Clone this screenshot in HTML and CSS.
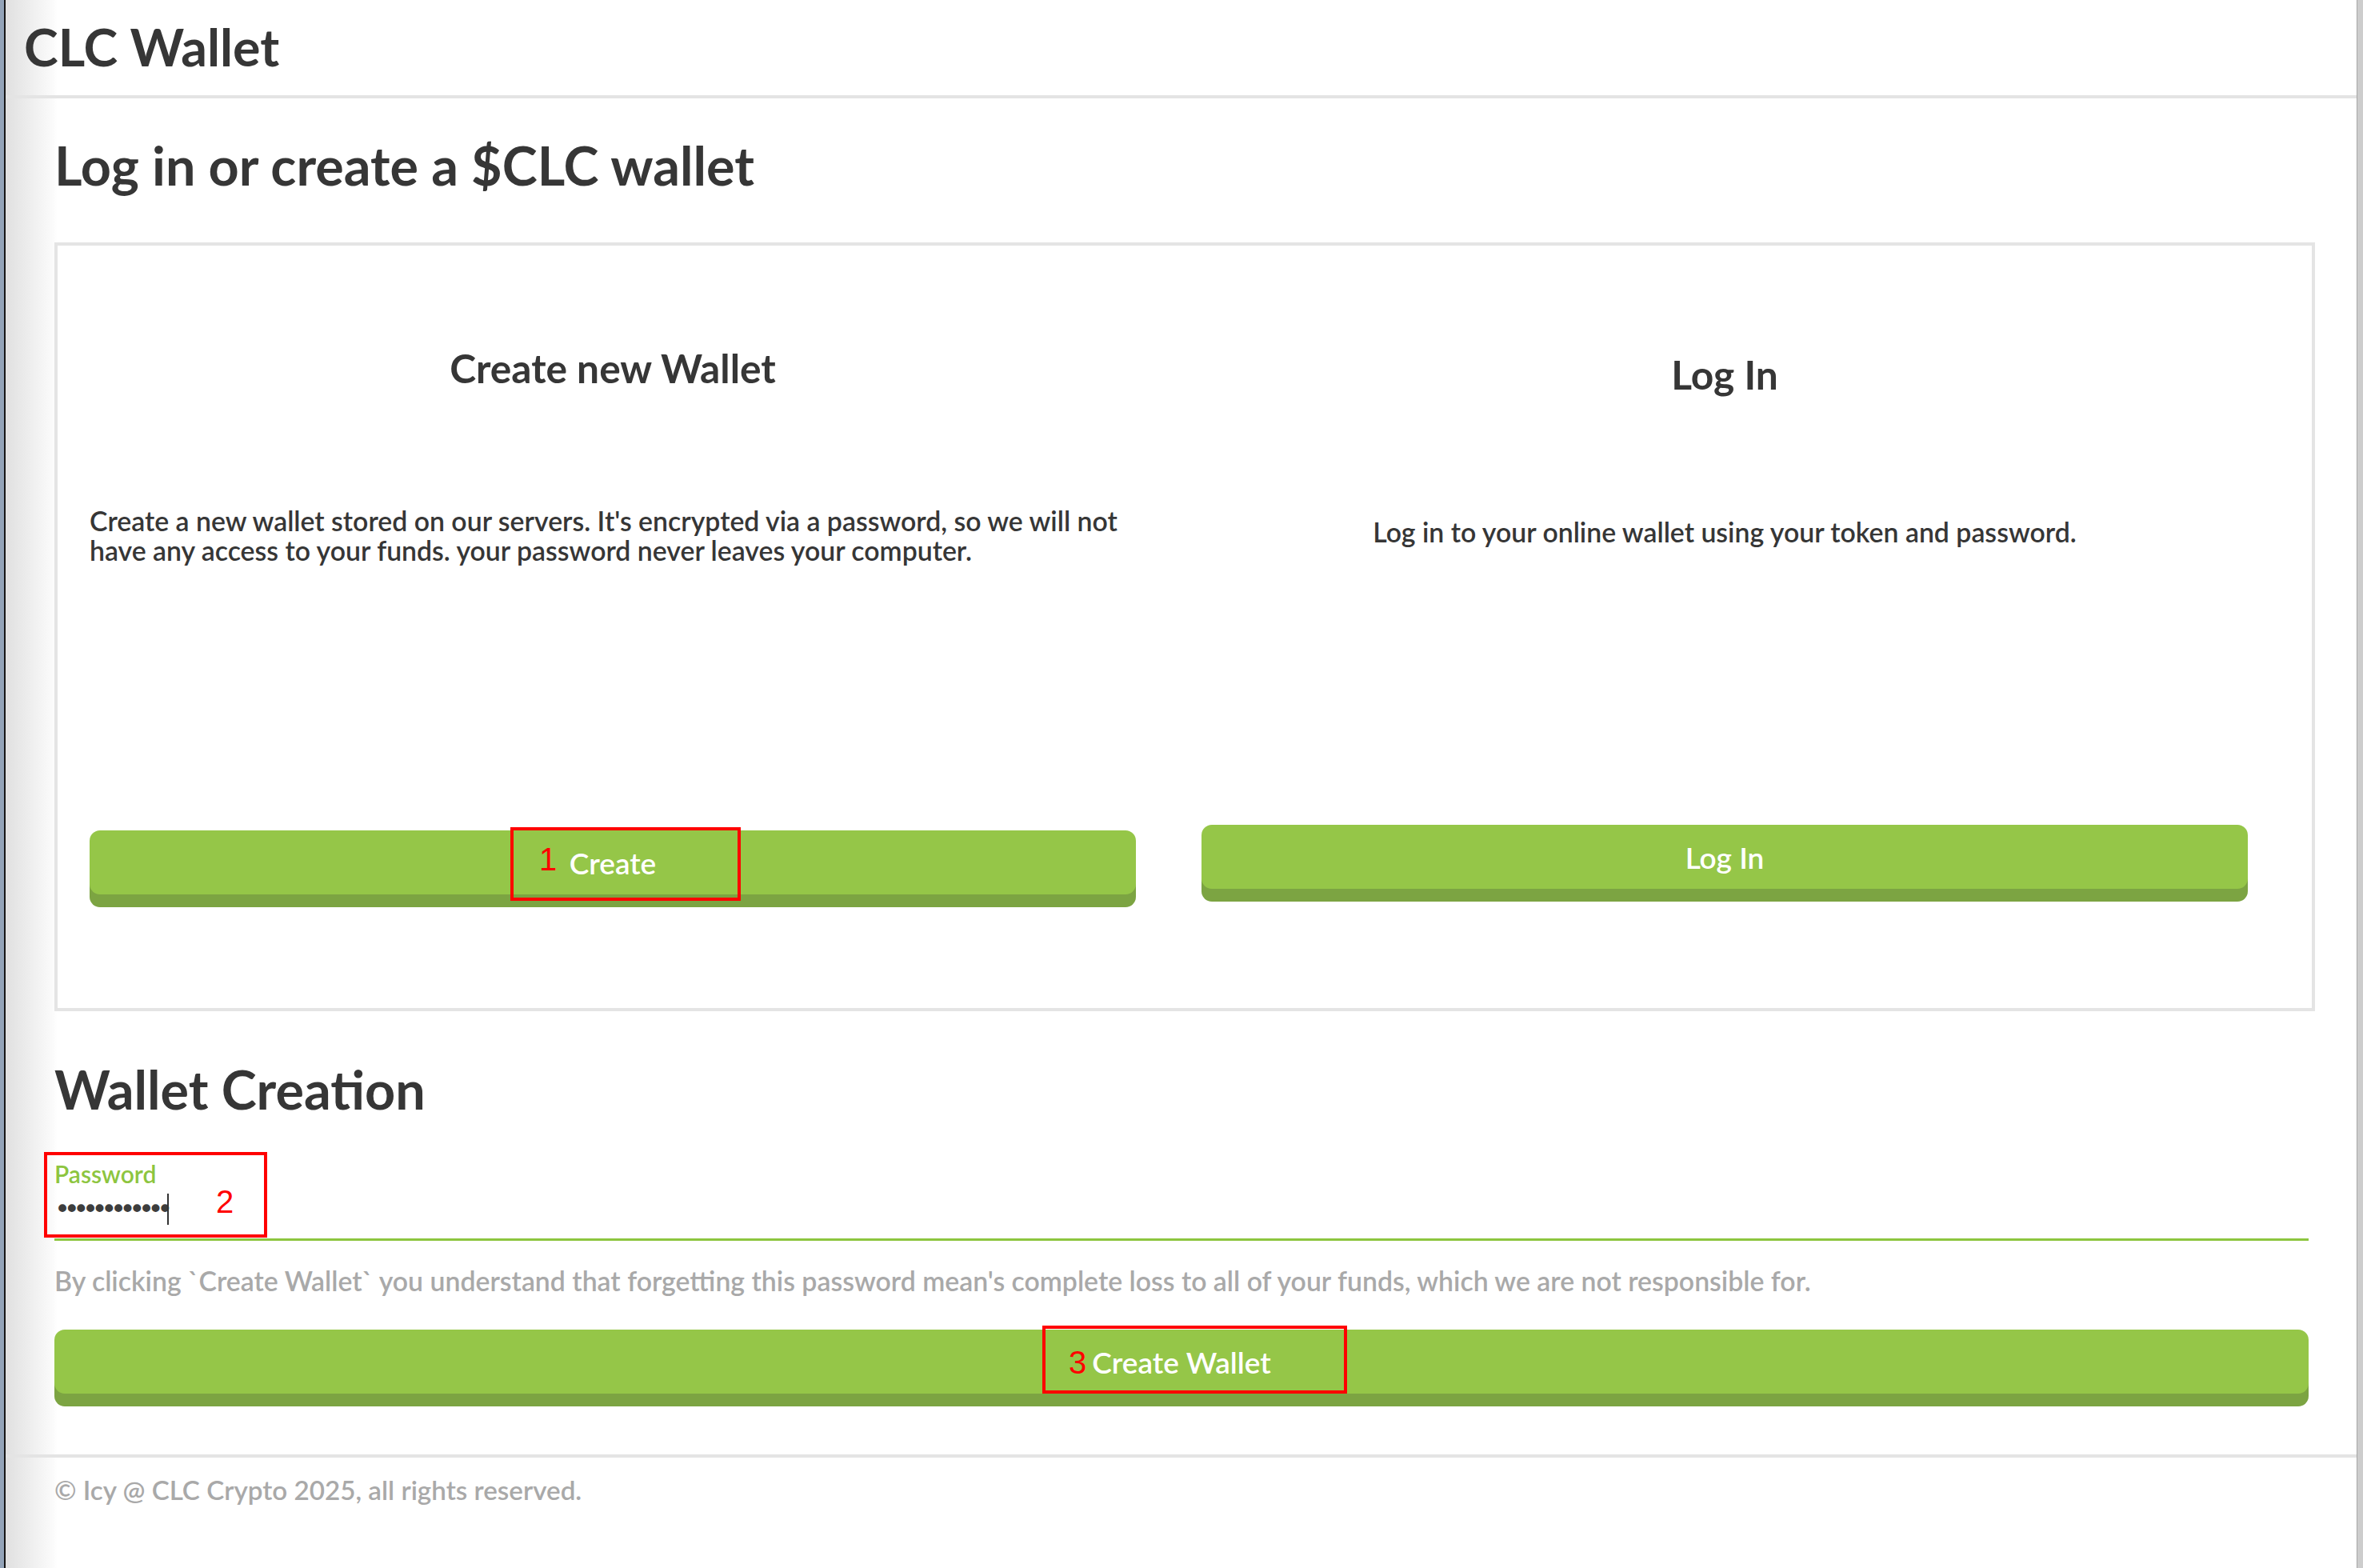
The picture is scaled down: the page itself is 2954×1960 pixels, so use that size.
FILE: index.html
```html
<!DOCTYPE html>
<html lang="en">
<head>
<meta charset="utf-8">
<title>CLC Wallet</title>
<link rel="stylesheet" href="styles.css">
</head>
<body>
<div class="app">
  <header class="topbar">
    <h1 class="brand">CLC Wallet</h1>
  </header>
  <main class="content">
    <h2 class="page-title">Log in or create a $CLC wallet</h2>
    <section class="choice-card">
      <div class="choice choice-create">
        <h3 class="choice-title">Create new Wallet</h3>
        <p class="choice-text">Create a new wallet stored on our servers. It's encrypted via a password, so we will not have any access to your funds. your password never leaves your computer.</p>
        <button class="btn">Create<span class="mark mark-1"><span class="mark-num">1</span></span></button>
      </div>
      <div class="choice choice-login">
        <h3 class="choice-title">Log In</h3>
        <p class="choice-text">Log in to your online wallet using your token and password.</p>
        <button class="btn">Log In</button>
      </div>
    </section>
    <h2 class="page-title section-title">Wallet Creation</h2>
    <div class="field">
      <label class="field-label">Password</label>
      <div class="pw-input"><span class="pw-dots">••••••••••••</span><span class="caret"></span></div>
      <span class="mark mark-2"><span class="mark-num">2</span></span>
    </div>
    <p class="disclaimer">By clicking `Create Wallet` you understand that forgetting this password mean's complete loss to all of your funds, which we are not responsible for.</p>
    <button class="btn btn-wide">Create Wallet<span class="mark mark-3"><span class="mark-num">3</span></span></button>
  </main>
  <footer class="footer">© Icy @ CLC Crypto 2025, all rights reserved.</footer>
</div>
</body>
</html>
```
FILE: styles.css
```css
* { box-sizing: border-box; }

html, body {
  margin: 0;
  padding: 0;
}

body {
  min-height: 1960px;
  font-family: Lato, "Open Sans", sans-serif;
  color: #363636;
  background: linear-gradient(to right,
    #93a3b8 0, #93a3b8 5px,
    #161616 5px, #161616 7px,
    #e0e0e0 7px, #fbfbfb 66px, #ffffff 72px,
    #ffffff calc(100% - 8px),
    #a6a6a6 calc(100% - 8px), #a6a6a6 calc(100% - 7px),
    #cdcdcd calc(100% - 7px), #cdcdcd 100%);
}

.app {
  margin: 0 8px 0 7px;
}

.topbar {
  height: 123px;
  border-bottom: 4px solid #e4e4e4;
  padding-left: 23px;
  padding-bottom: 4px;
  display: flex;
  align-items: center;
}

.brand {
  margin: 0;
  font-size: 64.5px;
  font-weight: 700;
  line-height: 70px;
}

.content {
  padding: 0 52px 0 61px;
}

.page-title {
  margin: 43px 0 0 0;
  font-size: 66.5px;
  font-weight: 700;
  line-height: 80px;
}

.choice-card {
  margin-top: 57px;
  border: 4px solid #e4e4e4;
  background: #ffffff;
  padding: 0 80px 0 40px;
  display: grid;
  grid-template-columns: 1fr 1fr;
  column-gap: 82px;
  align-items: start;
}

.choice {
  display: flex;
  flex-direction: column;
}

.choice-title {
  margin: 0;
  font-size: 49.7px;
  font-weight: 700;
  line-height: 58px;
  text-align: center;
}

.choice-text {
  margin: 0;
  font-size: 33.8px;
  font-weight: 600;
  line-height: 37px;
}

.choice-create .choice-title { margin-top: 124px; }
.choice-create .choice-text { margin-top: 144px; text-align: left; }
.choice-create .btn { margin-top: 331px; margin-bottom: 142px; }

.choice-login .choice-title { margin-top: 132px; }
.choice-login .choice-text { margin-top: 150px; text-align: center; }
.choice-login .btn { margin-top: 347px; margin-bottom: 149px; }

.btn {
  position: relative;
  display: block;
  width: 100%;
  height: 80px;
  border: 0;
  border-radius: 13px;
  background: #95c648;
  box-shadow: 0 16px 0 #7ca442;
  color: #ffffff;
  font-family: Lato, "Open Sans", sans-serif;
  font-size: 37px;
  font-weight: 600;
  padding: 0;
  cursor: pointer;
}

.section-title {
  margin-top: 57px;
}

.field {
  position: relative;
  margin-top: 50px;
  margin-right: 8px;
}

.field-label {
  display: block;
  color: #8dc53f;
  font-size: 30px;
  font-weight: 600;
  line-height: 32px;
}

.pw-input {
  height: 68px;
  padding-top: 2px;
  padding-bottom: 11px;
  border-bottom: 3px solid #8dc53f;
  display: flex;
  align-items: center;
}

.pw-dots {
  font-family: "DejaVu Sans", sans-serif;
  font-size: 34px;
  letter-spacing: -8.4px;
  color: #3d3d3d;
  line-height: 40px;
}

.caret {
  display: inline-block;
  width: 2px;
  height: 39px;
  margin-left: 1px;
  background: #333333;
}

.disclaimer {
  margin: 32px 0 0 0;
  color: #a9a9a9;
  font-size: 33.8px;
  font-weight: 600;
  line-height: 36px;
}

.btn-wide {
  margin-top: 43px;
  width: calc(100% - 8px);
}

.footer {
  margin-top: 76px;
  border-top: 4px solid #e4e4e4;
  padding: 21px 0 0 61px;
  color: #a9a9a9;
  font-size: 33.2px;
  font-weight: 600;
  line-height: 38px;
}

/* red annotation overlays */
.mark {
  position: absolute;
  border: 4px solid #ff0000;
  pointer-events: none;
}

.mark-num {
  position: absolute;
  font-family: "Liberation Sans", Arial, sans-serif;
  font-size: 40px;
  font-weight: 400;
  line-height: 40px;
  color: #ff0000;
}

.mark-1 { left: 526px; top: -4px; width: 288px; height: 92px; }
.mark-1 .mark-num { left: 32px; top: 16px; }

.mark-2 { left: -13px; top: -11px; width: 279px; height: 107px; }
.mark-2 .mark-num { left: 211px; top: 38px; }

.mark-3 { left: 1235px; top: -5px; width: 381px; height: 85px; }
.mark-3 .mark-num { left: 29px; top: 22px; }
```
